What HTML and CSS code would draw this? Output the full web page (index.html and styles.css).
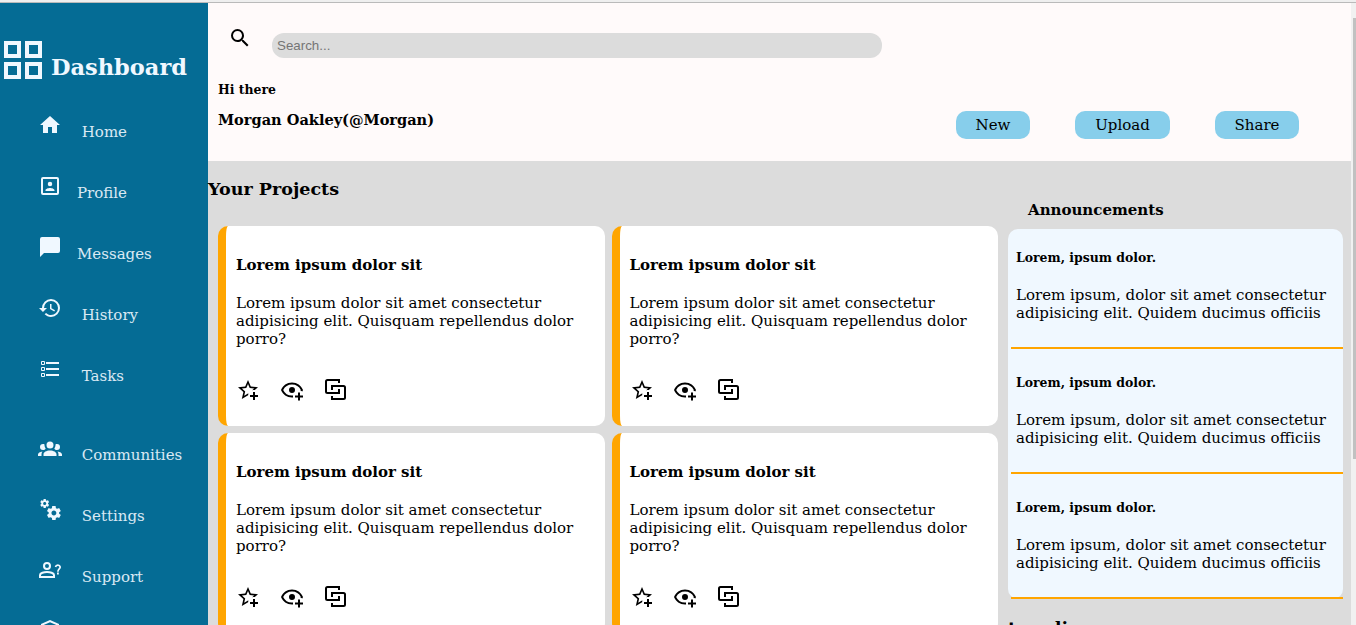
FILE: index.html
```html
<!DOCTYPE html>
<html lang="en">
<head>
<meta charset="utf-8">
<title>Dashboard</title>
<link rel="stylesheet" href="styles.css">
</head>
<body>
<svg class="defs" aria-hidden="true">
  <symbol id="star" viewBox="0 0 24 24"><path d="M5.8 21L7.4 14L2 9.2L9.2 8.6L12 2L14.8 8.6L22 9.2L18.8 12H18C17.3 12 16.6 12.1 15.9 12.4L18.1 10.5L13.7 10.1L12 6.1L10.3 10.1L5.9 10.5L9.2 13.4L8.2 17.7L12 15.4L12.5 15.7C12.3 16.2 12.1 16.8 12.1 17.3L5.8 21M17 14V17H14V19H17V22H19V19H22V17H19V14H17Z"/></symbol>
  <symbol id="eye" viewBox="0 0 24 24"><path d="M12 4.5C7 4.5 2.73 7.61 1 12C2.73 16.39 7 19.5 12 19.5C12.36 19.5 12.72 19.5 13.08 19.45A6 6 0 0 1 13 18.5A6 6 0 0 1 13.08 17.43C12.72 17.47 12.36 17.5 12 17.5A9.6 9.6 0 0 1 3.18 12A9.82 9.82 0 0 1 20.82 12C20.7 12.24 20.56 12.45 20.43 12.68A6 6 0 0 1 22.3 13.5C22.57 13 22.8 12.5 23 12C21.27 7.61 17 4.5 12 4.5M12 9A3 3 0 1 0 12 15A3 3 0 0 0 12 9M18 14.5V17.5H15V19.5H18V22.5H20V19.5H23V17.5H20V14.5Z"/></symbol>
  <symbol id="fork" viewBox="0 0 24 24"><path d="M15 5V2H3.5Q2 2 2 3.5V13.5Q2 15 3.5 15H15V11M8 12V8H19.5Q21 8 21 9.5V19.5Q21 21 19.5 21H8V18" fill="none" stroke="currentColor" stroke-width="2"/></symbol>
</svg>
<div class="chrome"></div>
<div class="page">
  <aside class="sidebar">
    <div class="brand">
      <svg class="logo" viewBox="0 0 38 38"><path d="M2 2h13v13H2zM23 2h13v13H23zM2 23h13v13H2zM23 23h13v13H23z"/></svg>
      <h1 class="brand-name">Dashboard</h1>
    </div>
    <nav class="nav">
      <div class="nav-item"><svg class="icon" viewBox="0 0 24 24"><path d="M10 20V14H14V20H19V12H22L12 3L2 12H5V20H10Z"/></svg><span>Home</span></div>
      <div class="nav-item tight"><svg class="icon" viewBox="0 0 24 24"><path d="M19 19H5V5H19M19 3H5A2 2 0 0 0 3 5V19A2 2 0 0 0 5 21H19A2 2 0 0 0 21 19V5A2 2 0 0 0 19 3M16.5 16.25C16.5 14.75 13.5 14 12 14S7.5 14.75 7.5 16.25V17H16.5M12 12.25A2.25 2.25 0 1 0 9.75 10A2.25 2.25 0 0 0 12 12.25Z"/></svg><span>Profile</span></div>
      <div class="nav-item tight"><svg class="icon" viewBox="0 0 24 24"><path d="M20 2H4A2 2 0 0 0 2 4V22L6 18H20A2 2 0 0 0 22 16V4A2 2 0 0 0 20 2Z"/></svg><span>Messages</span></div>
      <div class="nav-item"><svg class="icon" viewBox="0 0 24 24"><path d="M13.5 8H12V13L16.28 15.54L17 14.33L13.5 12.25V8M13 3A9 9 0 0 0 4 12H1L4.96 16.03L9 12H6A7 7 0 0 1 13 5A7 7 0 0 1 20 12A7 7 0 0 1 13 19C11.07 19 9.32 18.21 8.06 16.94L6.64 18.36C8.27 20 10.5 21 13 21A9 9 0 0 0 22 12A9 9 0 0 0 13 3"/></svg><span>History</span></div>
      <div class="nav-item"><svg class="icon" viewBox="0 0 24 24"><path d="M8 5H21V7H8ZM8 11H21V13H8ZM8 17H21V19H8Z"/><path d="M3.5 4.5h3v3h-3zM3.5 10.5h3v3h-3zM3.5 16.5h3v3h-3z" fill="none" stroke="currentColor"/></svg><span>Tasks</span></div>
    </nav>
    <nav class="nav nav-secondary">
      <div class="nav-item"><svg class="icon" viewBox="0 0 24 24"><path d="M12 5.5A3.5 3.5 0 0 1 15.5 9A3.5 3.5 0 0 1 12 12.5A3.5 3.5 0 0 1 8.5 9A3.5 3.5 0 0 1 12 5.5M5 8C5.56 8 6.08 8.15 6.53 8.42C6.38 9.85 6.8 11.27 7.66 12.38C7.16 13.34 6.16 14 5 14A3 3 0 0 1 2 11A3 3 0 0 1 5 8M19 8A3 3 0 0 1 22 11A3 3 0 0 1 19 14C17.84 14 16.84 13.34 16.34 12.38C17.2 11.27 17.62 9.85 17.47 8.42C17.92 8.15 18.44 8 19 8M5.5 18.25C5.5 16.18 8.41 14.5 12 14.5C15.59 14.5 18.5 16.18 18.5 18.25V20H5.5V18.25M0 20V18.5C0 17.11 1.89 15.94 4.45 15.6C3.86 16.28 3.5 17.22 3.5 18.25V20H0M24 20H20.5V18.25C20.5 17.22 20.14 16.28 19.55 15.6C22.11 15.94 24 17.11 24 18.5V20Z"/></svg><span>Communities</span></div>
      <div class="nav-item"><svg class="icon" viewBox="0 0 24 24"><path d="M15.9 18.45C17.25 18.45 18.35 17.35 18.35 16C18.35 14.65 17.25 13.55 15.9 13.55C14.54 13.55 13.45 14.65 13.45 16C13.45 17.35 14.54 18.45 15.9 18.45M21.1 16.68L22.58 17.84C22.71 17.95 22.75 18.13 22.66 18.29L21.26 20.71C21.17 20.86 21 20.92 20.83 20.86L19.09 20.16C18.73 20.44 18.33 20.67 17.91 20.85L17.64 22.7C17.62 22.87 17.47 23 17.3 23H14.5C14.32 23 14.18 22.87 14.15 22.7L13.89 20.85C13.46 20.67 13.07 20.44 12.71 20.16L10.96 20.86C10.81 20.92 10.62 20.86 10.54 20.71L9.14 18.29C9.05 18.13 9.09 17.95 9.22 17.84L10.7 16.68L10.65 16L10.7 15.31L9.22 14.16C9.09 14.05 9.05 13.86 9.14 13.71L10.54 11.29C10.62 11.13 10.81 11.07 10.96 11.13L12.71 11.84C13.07 11.56 13.46 11.32 13.89 11.15L14.15 9.29C14.18 9.13 14.32 9 14.5 9H17.3C17.47 9 17.62 9.13 17.64 9.29L17.91 11.15C18.33 11.32 18.73 11.56 19.09 11.84L20.83 11.13C21 11.07 21.17 11.13 21.26 11.29L22.66 13.71C22.75 13.86 22.71 14.05 22.58 14.16L21.1 15.31L21.15 16L21.1 16.68M6.69 8.07C7.56 8.07 8.26 7.37 8.26 6.5C8.26 5.63 7.56 4.92 6.69 4.92C5.82 4.92 5.11 5.63 5.11 6.5A1.58 1.58 0 0 0 6.69 8.07M10.03 6.94L11 7.68C11.07 7.75 11.09 7.87 11.03 7.97L10.13 9.53C10.08 9.63 9.96 9.67 9.86 9.63L8.74 9.18L8 9.62L7.81 10.81C7.79 10.92 7.7 11 7.59 11H5.79C5.67 11 5.58 10.92 5.56 10.81L5.4 9.62L4.64 9.18L3.52 9.63C3.41 9.67 3.3 9.63 3.24 9.53L2.34 7.97C2.28 7.87 2.31 7.75 2.39 7.68L3.34 6.94L3.31 6.5L3.34 6.06L2.39 5.32C2.31 5.25 2.28 5.13 2.34 5.03L3.24 3.47C3.3 3.37 3.41 3.33 3.52 3.37L4.63 3.82L5.4 3.38L5.56 2.19C5.58 2.08 5.67 2 5.79 2H7.59C7.7 2 7.79 2.08 7.81 2.19L8 3.38L8.74 3.82L9.86 3.37C9.96 3.33 10.08 3.37 10.13 3.47L11.03 5.03C11.09 5.13 11.07 5.25 11 5.32L10.03 6.06L10.06 6.5L10.03 6.94Z"/></svg><span>Settings</span></div>
      <div class="nav-item"><svg class="icon" viewBox="0 0 24 24"><g fill="none" stroke="currentColor" stroke-width="2"><circle cx="9" cy="8" r="3"/><path d="M2 19V17C2 15 6 14 9 14S16 15 16 17V19Z"/><path d="M17.5 9A2.4 2.4 0 0 1 22.2 9C22.2 11 19.9 10.8 19.9 13.8" stroke-width="1.7"/></g><path d="M19 14.6h1.8v1.8h-1.8z"/></svg><span>Support</span></div>
      <div class="nav-item"><svg class="icon" viewBox="0 0 24 24"><path d="M21 11C21 16.55 17.16 21.74 12 23C6.84 21.74 3 16.55 3 11V5L12 1L21 5V11M12 21C15.75 20 19 15.54 19 11.22V6.3L12 3.18L5 6.3V11.22C5 15.54 8.25 20 12 21"/></svg></div>
    </nav>
  </aside>
  <div class="content">
    <header class="header">
      <div class="search">
        <svg class="icon" viewBox="0 0 24 24"><path d="M9.5 3A6.5 6.5 0 0 1 16 9.5C16 11.11 15.41 12.59 14.44 13.73L14.71 14H15.5L20.5 19L19 20.5L14 15.5V14.71L13.73 14.44C12.59 15.41 11.11 16 9.5 16A6.5 6.5 0 0 1 3 9.5A6.5 6.5 0 0 1 9.5 3M9.5 5C7 5 5 7 5 9.5C5 12 7 14 9.5 14C12 14 14 12 14 9.5C14 7 12 5 9.5 5Z"/></svg>
        <input class="search-input" type="text" placeholder="Search...">
      </div>
      <div class="user-row">
        <div class="user">
          <h5 class="greeting">Hi there</h5>
          <h4 class="user-name">Morgan Oakley(@Morgan)</h4>
        </div>
        <div class="actions">
          <button class="button new">New</button>
          <button class="button upload">Upload</button>
          <button class="button share">Share</button>
        </div>
      </div>
    </header>
    <main class="main">
      <section class="projects">
        <h3 class="projects-title">Your Projects</h3>
        <div class="cards">
          <article class="card"><h4>Lorem ipsum dolor sit</h4><p>Lorem ipsum dolor sit amet consectetur adipisicing elit. Quisquam repellendus dolor porro?</p><div class="card-icons"><svg class="icon"><use href="#star"/></svg><svg class="icon"><use href="#eye"/></svg><svg class="icon"><use href="#fork"/></svg></div></article>
          <article class="card"><h4>Lorem ipsum dolor sit</h4><p>Lorem ipsum dolor sit amet consectetur adipisicing elit. Quisquam repellendus dolor porro?</p><div class="card-icons"><svg class="icon"><use href="#star"/></svg><svg class="icon"><use href="#eye"/></svg><svg class="icon"><use href="#fork"/></svg></div></article>
          <article class="card"><h4>Lorem ipsum dolor sit</h4><p>Lorem ipsum dolor sit amet consectetur adipisicing elit. Quisquam repellendus dolor porro?</p><div class="card-icons"><svg class="icon"><use href="#star"/></svg><svg class="icon"><use href="#eye"/></svg><svg class="icon"><use href="#fork"/></svg></div></article>
          <article class="card"><h4>Lorem ipsum dolor sit</h4><p>Lorem ipsum dolor sit amet consectetur adipisicing elit. Quisquam repellendus dolor porro?</p><div class="card-icons"><svg class="icon"><use href="#star"/></svg><svg class="icon"><use href="#eye"/></svg><svg class="icon"><use href="#fork"/></svg></div></article>
        </div>
      </section>
      <aside class="side">
        <h4 class="side-title">Announcements</h4>
        <div class="announcements">
          <div class="notice"><h5>Lorem, ipsum dolor.</h5><p>Lorem ipsum, dolor sit amet consectetur adipisicing elit. Quidem ducimus officiis</p></div>
          <div class="notice"><h5>Lorem, ipsum dolor.</h5><p>Lorem ipsum, dolor sit amet consectetur adipisicing elit. Quidem ducimus officiis</p></div>
          <div class="notice"><h5>Lorem, ipsum dolor.</h5><p>Lorem ipsum, dolor sit amet consectetur adipisicing elit. Quidem ducimus officiis</p></div>
        </div>
        <h3 class="trending">trending</h3>
      </aside>
    </main>
  </div>
  <div class="scrollbar"><div class="thumb"></div></div>
</div>
</body>
</html>
```
FILE: styles.css
```css
* { box-sizing: border-box; }
body {
  margin: 0;
  height: 625px;
  overflow: hidden;
  font: 15px/18px "DejaVu Serif", serif;
  color: #000;
}
h1, h3, h4, h5, p { margin: 0; }
h5 { font-size: 12.45px; line-height: 15px; }
h4 { font-size: 15px; line-height: 18px; }
h3 { font-size: 17.55px; line-height: 21px; }
.defs { display: none; }
.icon { width: 24px; height: 24px; flex: none; fill: currentColor; }
.chrome { height: 3px; background: #efefef; border-bottom: 1px solid #bababa; }
.page { display: flex; height: 622px; overflow: hidden; }

.sidebar { width: 208px; flex: none; background: #056c95; color: aliceblue; }
.brand { display: flex; gap: 9px; padding: 38px 0 0 4px; height: 110px; }
.logo { width: 38px; height: 38px; fill: none; stroke: currentColor; stroke-width: 4; }
.brand-name { font-size: 22.5px; line-height: 26px; margin-top: 13px; }
.nav-item { display: flex; align-items: baseline; gap: 19.77px; height: 61px; padding-left: 38px; }
.nav-item.tight { gap: 15px; }
.nav-item span { opacity: .9; }
.nav-secondary { margin-top: 18px; }

.content { flex: 1; min-width: 0; background: #dcdcdc; }
.header { height: 158px; background: snow; }
.search { display: flex; padding: 23px 0 0 20px; gap: 20px; }
.search-input {
  width: 610px;
  height: 25px;
  margin-top: 7px;
  padding: 0 5px;
  border: 0;
  border-radius: 12px;
  background: #dcdcdc;
  font: 13.333px "Liberation Sans", sans-serif;
}
.user-row { display: flex; justify-content: space-between; padding: 24px 52px 0 10px; }
.user-name { margin-top: 14px; font-size: 14.56px; }
.actions { display: flex; gap: 45px; padding-top: 29px; }
.button {
  height: 28px;
  padding: 0;
  border: 0;
  border-radius: 10px;
  background: skyblue;
  color: #000;
  font: inherit;
}
.new { width: 74px; }
.upload { width: 95px; }
.share { width: 84px; }

.main { display: flex; gap: 10px; }
.projects { width: 790px; }
.projects-title { margin-top: 18px; }
.cards {
  display: grid;
  grid-template-columns: 1fr 1fr;
  grid-auto-rows: 200px;
  gap: 7px;
  padding: 26px 0 0 10px;
}
.card {
  padding: 30px 10px 0;
  border-left: 8px solid orange;
  border-radius: 10px;
  background: #fff;
}
.card p { margin-top: 20px; }
.card-icons { display: flex; gap: 19.77px; margin-top: 30px; }

.side { width: 335px; }
.side-title { margin: 40px 0 10px 20px; }
.announcements { height: 370px; padding-left: 3px; border-radius: 10px; background: aliceblue; }
.notice { height: 125px; padding: 26px 5px 0; border-bottom: 2px solid orange; }
.notice:first-child { height: 120px; padding-top: 21px; }
.notice p { margin-top: 21px; }
.trending { margin-top: 19px; }

.scrollbar { width: 5px; flex: none; padding: 15px 0 0 2px; background: #f1f1f1; }
.thumb { height: 441px; background: #c1c1c1; }
```
